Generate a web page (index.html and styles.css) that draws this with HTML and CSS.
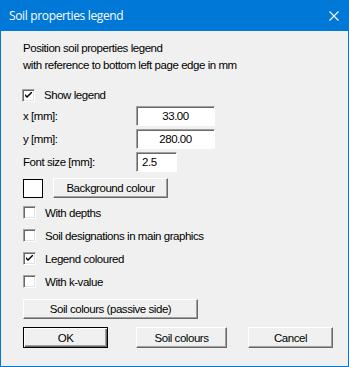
FILE: index.html
```html
<!DOCTYPE html>
<html lang="en">
  <head>
    <meta charset="UTF-8" />
    <title>Soil properties legend</title>
    <link rel="stylesheet" href="styles.css">
  </head>
  <body>
    <div class="window">
      <!-- Title bar -->
      <div class="titlebar">
        <span class="title">Soil properties legend</span>
        <svg class="close" width="10" height="10" viewBox="0 0 10 10">
          <path d="M0.5 0.5 L9.5 9.5 M9.5 0.5 L0.5 9.5" stroke="#ffffff" stroke-width="1.1" fill="none" />
        </svg>
      </div>

      <div class="content">
        <div class="intro">
          <div>Position soil properties legend</div>
          <div>with reference to bottom left page edge in mm</div>
        </div>

        <label class="check first">
          <span class="box"><svg width="7" height="7" viewBox="0 0 7 7"><path d="M0 2 L0 4 L2 6 L7 1 L7 -1 L2 4 Z" fill="#000" /></svg></span>
          <span>Show legend</span>
        </label>

        <div class="field">
          <span class="field-label">x [mm]:</span>
          <span class="input wide center">33.00</span>
        </div>
        <div class="field">
          <span class="field-label">y [mm]:</span>
          <span class="input wide center">280.00</span>
        </div>
        <div class="field">
          <span class="field-label">Font size [mm]:</span>
          <span class="input small">2.5</span>
        </div>

        <div class="colour-row">
          <span class="swatch"></span>
          <span class="btn bg-btn">Background colour</span>
        </div>

        <div class="checks">
          <label class="check"><span class="box"></span><span>With depths</span></label>
          <label class="check"><span class="box"></span><span>Soil designations in main graphics</span></label>
          <label class="check">
            <span class="box"><svg width="7" height="7" viewBox="0 0 7 7"><path d="M0 2 L0 4 L2 6 L7 1 L7 -1 L2 4 Z" fill="#000" /></svg></span>
            <span>Legend coloured</span>
          </label>
          <label class="check"><span class="box"></span><span>With k-value</span></label>
        </div>

        <span class="btn passive-btn">Soil colours (passive side)</span>

        <div class="actions">
          <span class="btn default">OK</span>
          <span class="btn soil-btn">Soil colours</span>
          <span class="btn">Cancel</span>
        </div>
      </div>
    </div>
  </body>
</html>
```

FILE: styles.css
```css
body {
  margin: 0;
  background-color: #f0f0f0;
  font-family: "Liberation Sans", Arial, sans-serif;
  font-size: 11.5px;
  letter-spacing: -0.45px;
  color: #000000;
}
.window {
  width: 349px;
  height: 367px;
  box-sizing: border-box;
  border: 1px solid #0078d7;
  border-top: none;
  background-color: #f0f0f0;
}
.titlebar {
  height: 31px;
  margin: 0 -1px;
  background-color: #0078d7;
  color: #ffffff;
  display: flex;
  align-items: center;
  justify-content: space-between;
  padding: 0 10px 0 9px;
}
.title {
  font-family: "Open Sans", sans-serif;
  font-size: 12px;
  letter-spacing: -0.35px;
}
.close {
  display: block;
}
.content {
  padding: 9px 0 0 21px;
  display: flex;
  flex-direction: column;
  align-items: flex-start;
}
.intro {
  line-height: 17px;
  padding-left: 1px;
}
.check {
  display: flex;
  align-items: center;
  height: 23px;
  gap: 9px;
}
.check.first {
  height: 20px;
  margin-top: 11px;
}
.box {
  width: 13px;
  height: 13px;
  box-sizing: border-box;
  background-color: #ffffff;
  border: 1px solid;
  border-color: #a0a0a0 #ffffff #ffffff #a0a0a0;
  box-shadow: inset 1px 1px #696969, inset -1px -1px #e3e3e3;
  display: flex;
  align-items: center;
  justify-content: center;
}
.box svg {
  display: block;
}
.field {
  display: flex;
  align-items: center;
  height: 20px;
  margin-top: 1px;
  margin-bottom: 2px;
}
.field-label {
  width: 113px;
  padding-left: 1px;
}
.input {
  height: 20px;
  box-sizing: border-box;
  background-color: #ffffff;
  border: 1px solid;
  border-color: #a0a0a0 #ffffff #ffffff #a0a0a0;
  box-shadow: inset 1px 1px #696969;
  line-height: 18px;
  padding: 0 4px;
}
.input.wide {
  width: 79px;
}
.input.small {
  width: 41px;
  padding-left: 5px;
}
.center {
  text-align: center;
}
.colour-row {
  display: flex;
  align-items: center;
  gap: 10px;
  margin-top: 4px;
}
.swatch {
  width: 20px;
  height: 19px;
  box-sizing: border-box;
  border: 1px solid #000000;
  background-color: #ffffff;
  margin-left: 1px;
}
.btn {
  height: 20px;
  box-sizing: border-box;
  width: 85px;
  background-color: #f0f0f0;
  border: 1px solid;
  border-color: #ffffff #696969 #696969 #ffffff;
  box-shadow: inset -1px -1px #a0a0a0;
  display: flex;
  align-items: center;
  justify-content: center;
}
.bg-btn {
  width: 115px;
}
.checks {
  margin-top: 3px;
  padding-left: 1px;
}
.passive-btn {
  width: 175px;
  margin-top: 6px;
  margin-left: 1px;
}
.actions {
  display: flex;
  margin-top: 8px;
  margin-left: 1px;
  height: 21px;
}
.actions .btn {
  height: 21px;
}
.btn.default {
  border: 1px solid #000000;
  box-shadow: inset 1px 1px #ffffff, inset -1px -1px #696969, inset -2px -2px #a0a0a0;
}
.soil-btn {
  width: 91px;
  margin-left: 28px;
  margin-right: 21px;
}
```
